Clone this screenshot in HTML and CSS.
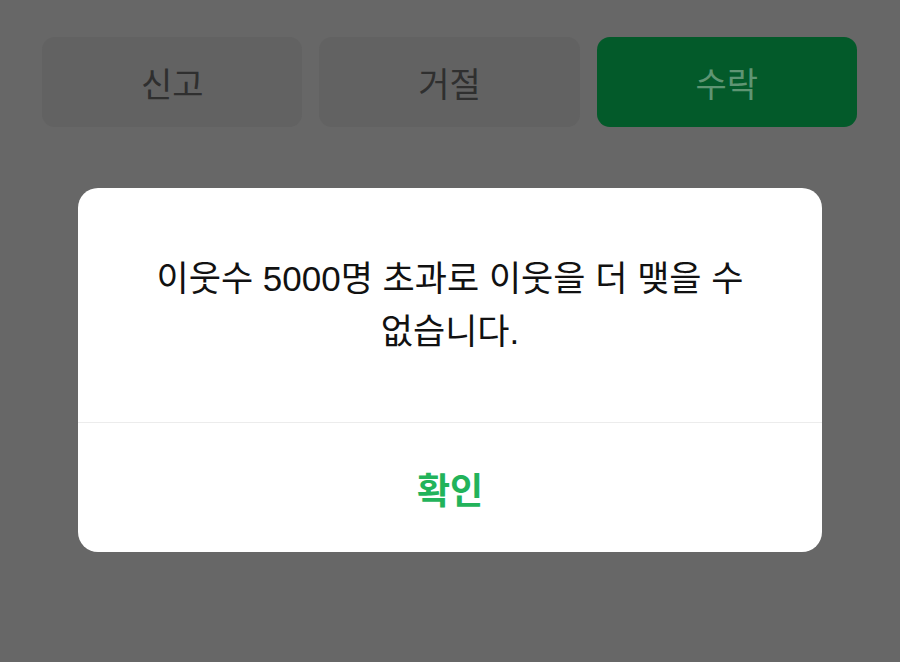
FILE: index.html
```html
<!DOCTYPE html>
<html lang="ko">
<head>
<meta charset="utf-8">
<link rel="stylesheet" href="styles.css">
</head>
<body>
<div class="actions">
  <div class="btn btn-gray">신고</div>
  <div class="btn btn-gray">거절</div>
  <div class="btn btn-green">수락</div>
</div>
<div class="dialog">
  <div class="message">이웃수 5000명 초과로 이웃을 더 맺을 수 없습니다.</div>
  <div class="confirm">확인</div>
</div>
</body>
</html>
```
FILE: styles.css
```css
html, body {
  margin: 0;
  padding: 0;
}
body {
  background: #676767;
  width: 900px;
  height: 662px;
  overflow: hidden;
  font-family: "Liberation Sans", "Noto Sans CJK KR", sans-serif;
}
.actions {
  display: flex;
  gap: 17px;
  padding: 37px 43px 0 42px;
}
.btn {
  flex: 1;
  height: 90px;
  border-radius: 13px;
  display: flex;
  align-items: center;
  justify-content: center;
  font-size: 34px;
}
.btn-gray {
  background: #626262;
  color: #2f2f2f;
}
.btn-green {
  background: #035a2a;
  color: #5f9573;
}
.dialog {
  margin: 61px 0 0 78px;
  width: 744px;
  height: 364px;
  background: #ffffff;
  border-radius: 20px;
  display: flex;
  flex-direction: column;
  overflow: hidden;
}
.message {
  height: 235px;
  box-sizing: border-box;
  padding: 0 40px;
  display: flex;
  align-items: center;
  justify-content: center;
  text-align: center;
  font-size: 35px;
  line-height: 53px;
  color: #111111;
  word-break: keep-all;
  border-bottom: 1.5px solid #ececec;
}
.confirm {
  flex: 1;
  display: flex;
  align-items: center;
  justify-content: center;
  font-size: 36px;
  font-weight: bold;
  color: #22b35a;
}
```
